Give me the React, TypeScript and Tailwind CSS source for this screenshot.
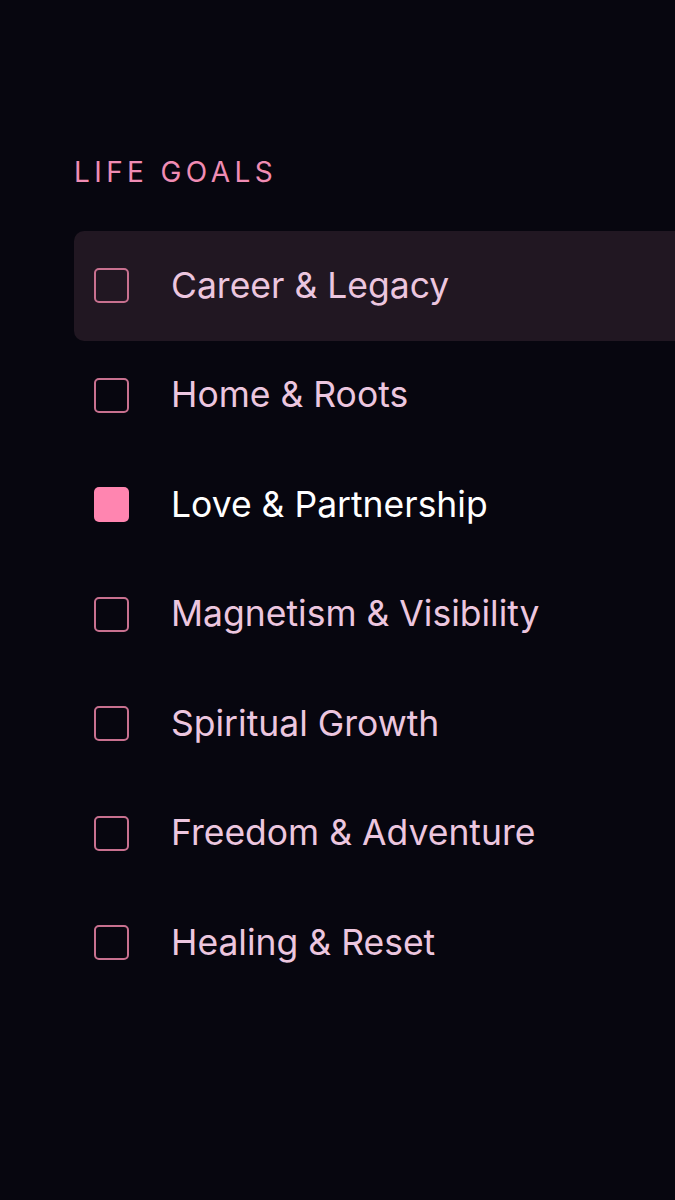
import React from "react";

const goals = [
  { label: "Career & Legacy", checked: false, active: true },
  { label: "Home & Roots", checked: false },
  { label: "Love & Partnership", checked: true },
  { label: "Magnetism & Visibility", checked: false },
  { label: "Spiritual Growth", checked: false },
  { label: "Freedom & Adventure", checked: false },
  { label: "Healing & Reset", checked: false },
];

export default function App() {
  return (
    <div
      className="w-[675px] h-[1200px] bg-[#07060f] overflow-hidden"
      style={{ fontFamily: "Inter, 'Noto Sans', sans-serif" }}
    >
      <div className="pl-[74px] pt-[156px]">
        <div className="text-[28px] leading-[32px] tracking-[0.157em] text-[#f08cb4] font-normal">
          LIFE GOALS
        </div>
        <div className="mt-[43px] flex flex-col">
          {goals.map((g) => (
            <div
              key={g.label}
              className={`h-[109.5px] flex items-center rounded-l-[10px] pl-[20px] ${
                g.active ? "bg-[#211722]" : ""
              }`}
            >
              <div
                className={`w-[35px] h-[35px] rounded-[5px] shrink-0 ${
                  g.checked
                    ? "bg-[#ff85b0]"
                    : "border-[2px] border-[#c8708f]"
                }`}
              />
              <div
                className={`ml-[42px] text-[35.5px] leading-[44px] ${
                  g.checked ? "text-white" : "text-[#ecc6df]"
                }`}
              >
                {g.label}
              </div>
            </div>
          ))}
        </div>
      </div>
    </div>
  );
}
